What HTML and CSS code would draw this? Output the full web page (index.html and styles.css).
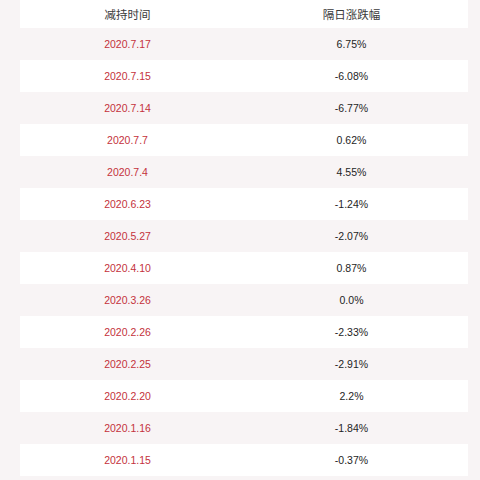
FILE: index.html
```html
<!DOCTYPE html>
<html lang="zh-CN">
<head>
  <meta charset="UTF-8">
  <title>减持时间</title>
  <link rel="stylesheet" href="styles.css">
</head>
<body>
  <table class="data-table">
    <thead>
      <tr>
        <th>减持时间</th>
        <th>隔日涨跌幅</th>
      </tr>
    </thead>
    <tbody>
      <tr><td class="date">2020.7.17</td><td>6.75%</td></tr>
      <tr><td class="date">2020.7.15</td><td>-6.08%</td></tr>
      <tr><td class="date">2020.7.14</td><td>-6.77%</td></tr>
      <tr><td class="date">2020.7.7</td><td>0.62%</td></tr>
      <tr><td class="date">2020.7.4</td><td>4.55%</td></tr>
      <tr><td class="date">2020.6.23</td><td>-1.24%</td></tr>
      <tr><td class="date">2020.5.27</td><td>-2.07%</td></tr>
      <tr><td class="date">2020.4.10</td><td>0.87%</td></tr>
      <tr><td class="date">2020.3.26</td><td>0.0%</td></tr>
      <tr><td class="date">2020.2.26</td><td>-2.33%</td></tr>
      <tr><td class="date">2020.2.25</td><td>-2.91%</td></tr>
      <tr><td class="date">2020.2.20</td><td>2.2%</td></tr>
      <tr><td class="date">2020.1.16</td><td>-1.84%</td></tr>
      <tr><td class="date">2020.1.15</td><td>-0.37%</td></tr>
    </tbody>
  </table>
</body>
</html>
```

FILE: styles.css
```css
/* Page background */
body {
  margin: 0;
  padding: 0 12px 4px 20px;
  background: #f8f4f5;
  font-family: "Liberation Sans", "Noto Sans CJK SC", sans-serif;
}

/* Table */
.data-table {
  width: 448px;
  border-collapse: collapse;
  table-layout: fixed;
}

.data-table th,
.data-table td {
  padding: 0 9px 0 0;
  text-align: center;
  vertical-align: middle;
}

.data-table th {
  height: 28px;
  background: #ffffff;
  font-weight: normal;
  font-size: 11.5px;
  color: #3a3a3a;
}

.data-table td {
  height: 32px;
  font-size: 10.5px;
  color: #1e1e1e;
}

.data-table tbody tr:nth-child(odd) {
  background: #f8f4f5;
}

.data-table tbody tr:nth-child(even) {
  background: #ffffff;
}

.data-table td.date {
  color: #c4323c;
}
```
